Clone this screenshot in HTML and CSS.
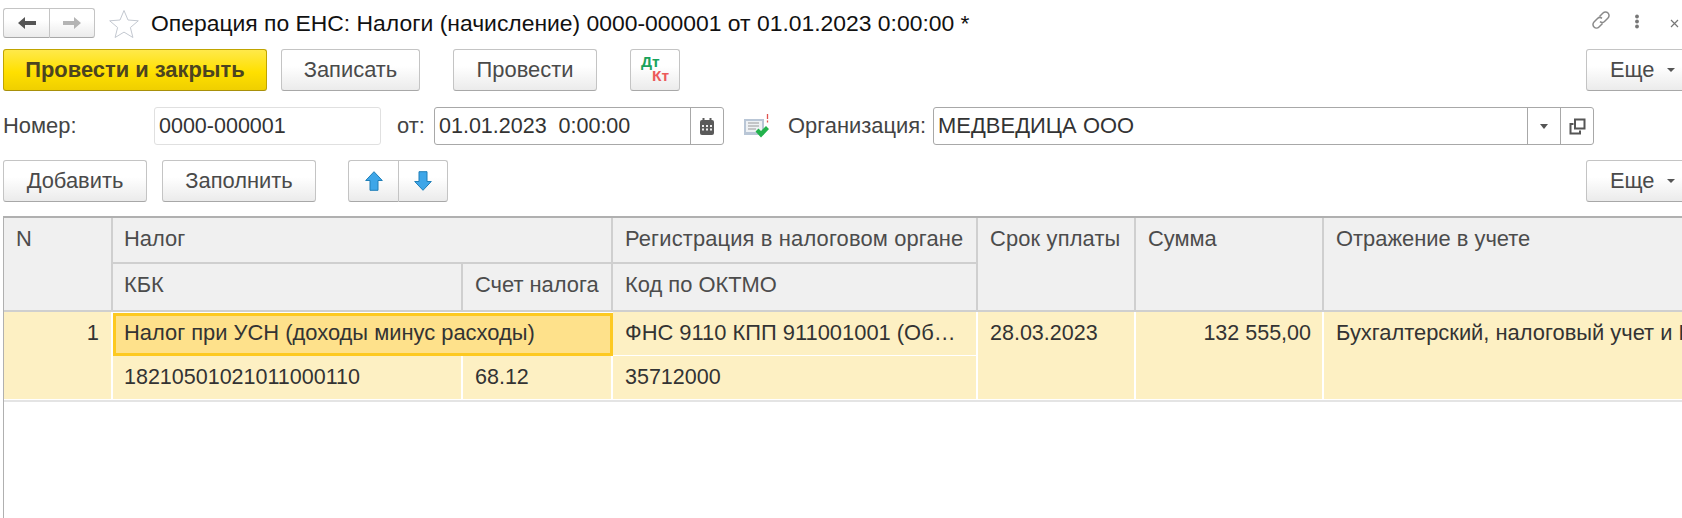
FILE: index.html
```html
<!DOCTYPE html>
<html lang="ru">
<head>
<meta charset="utf-8">
<title>Операция по ЕНС</title>
<link rel="stylesheet" href="styles.css">
</head>
<body>
<div class="page">
  <header class="row title-row">
    <div class="btn-group nav-group">
      <button class="btn seg nav-seg"><svg width="20" height="14" viewBox="0 0 20 14"><path d="M1 7 8 1v4h11v4H8v4z" fill="#555"/></svg></button>
      <button class="btn seg nav-seg"><svg width="20" height="14" viewBox="0 0 20 14"><path d="M19 7 12 1v4H1v4h11v4z" fill="#b4b4b4"/></svg></button>
    </div>
    <svg class="star" width="30" height="29" viewBox="0 0 30 29"><path d="M15 1.500 19 11l10.300 .8-7.900 6.700 2.500 10-8.900-5.400-8.900 5.400 2.500-10L.7 11.800 11 11z" fill="#fff" stroke="#c3c8d0" stroke-width="1"/></svg>
    <h1 class="title">Операция по ЕНС: Налоги (начисление) 0000-000001 от 01.01.2023 0:00:00 *</h1>
    <div class="win-tools">
      <svg class="tool-link" width="20" height="20" viewBox="0 0 20 20" fill="none" stroke="#8a8a8a" stroke-width="1.500"><path d="M8.500 6.500 12 3a3.400 3.400 0 0 1 5 5l-3.500 3.500a3.400 3.400 0 0 1-4.500 .2"/><path d="M11.500 13.500 8 17a3.400 3.400 0 0 1-5-5l3.500-3.500a3.400 3.400 0 0 1 4.500-.2"/></svg>
      <svg class="tool-dots" width="6" height="15" viewBox="0 0 6 15" fill="#777"><circle cx="3" cy="2.500" r="1.900"/><circle cx="3" cy="7.500" r="1.900"/><circle cx="3" cy="12.500" r="1.900"/></svg>
      <svg class="tool-close" width="9" height="9" viewBox="0 0 9 9" stroke="#777" stroke-width="1.200"><path d="M1 1l7 7M8 1 1 8"/></svg>
    </div>
  </header>

  <div class="row cmd-row">
    <button class="btn primary">Провести и закрыть</button>
    <button class="btn w-write">Записать</button>
    <button class="btn w-post">Провести</button>
    <button class="btn w-dtkt"><span class="dtkt"><span class="dt">Дт</span><span class="kt">Кт</span></span></button>
    <button class="btn more">Еще<i class="caret"></i></button>
  </div>

  <div class="row form-row">
    <label class="lbl lbl-num">Номер:</label>
    <div class="field f-num"><span class="val num">0000-000001</span></div>
    <label class="lbl lbl-from">от:</label>
    <div class="field f-date">
      <span class="val num">01.01.2023&nbsp; 0:00:00</span>
      <span class="fbtn fbtn-cal"><svg width="14" height="17" viewBox="0 0 14 17"><path d="M2 2h10a2 2 0 0 1 2 2v11a2 2 0 0 1-2 2H2a2 2 0 0 1-2-2V4a2 2 0 0 1 2-2z" fill="#5a5a5a"/><rect x="2.500" y="0" width="2" height="4" fill="#5a5a5a"/><rect x="9.500" y="0" width="2" height="4" fill="#5a5a5a"/><path d="M2 7h2v2H2zM6 7h2v2H6zM10 7h2v2h-2zM2 10.500h2v2H2zM6 10.500h2v2H6zM10 10.500h2v2h-2z" fill="#eee"/></svg></span>
    </div>
    <svg class="doc-status" width="26" height="26" viewBox="0 0 26 26"><path d="M1 6h20v16H1z" fill="#b9c6d6"/><path d="M3 8h16v11H3z" fill="#eef1f4"/><path d="M5 10h11M5 13h11M5 16h8" stroke="#9a9a9a" stroke-width="1.200"/><path d="M24.500 1v5M24.500 7.500v2" stroke="#e0524f" stroke-width="1.300"/><path d="M12.500 18.500l3-3 2.500 2.500 5-5 3 3-8 8.500z" fill="#22b24c"/></svg>
    <label class="lbl lbl-org">Организация:</label>
    <div class="field f-org">
      <span class="val val-org">МЕДВЕДИЦА ООО</span>
      <span class="fbtn fbtn-drop"><i class="caret caret-drop"></i></span>
      <span class="fbtn fbtn-open"><svg width="17" height="17" viewBox="0 0 17 17" fill="none" stroke="#555" stroke-width="2"><path d="M6 1.500h9.500v9H6z"/><path d="M4.500 6H1.500v9.500H11v-3"/></svg></span>
    </div>
  </div>

  <div class="row cmd-row tbl-cmd">
    <button class="btn w-add">Добавить</button>
    <button class="btn w-fill">Заполнить</button>
    <div class="btn-group move-group">
      <button class="btn seg move-seg"><svg width="18" height="20" viewBox="0 0 18 20"><path d="M9 .7 17.300 9.500H13v9.800H5V9.500H.7z" fill="#3ea6e8" stroke="#1f7fb8" stroke-width="1"/></svg></button>
      <button class="btn seg move-seg"><svg width="18" height="20" viewBox="0 0 18 20"><path d="M9 19.300 .7 10.500H5V.7h8v9.800h4.300z" fill="#3ea6e8" stroke="#1f7fb8" stroke-width="1"/></svg></button>
    </div>
    <button class="btn more">Еще<i class="caret"></i></button>
  </div>

  <section class="table-wrap">
    <div class="grid">
      <div class="hd c-n r-all-h">N</div>
      <div class="hd c-tax r1">Налог</div>
      <div class="hd c-reg r1 wide">Регистрация в налоговом органе</div>
      <div class="hd c-date r-all-h wide">Срок уплаты</div>
      <div class="hd c-sum r-all-h">Сумма</div>
      <div class="hd c-acc r-all-h">Отражение в учете</div>
      <div class="hd c-kbk r2">КБК</div>
      <div class="hd c-acct r2">Счет налога</div>
      <div class="hd c-reg r2">Код по ОКТМО</div>

      <div class="td c-n r-all-b right">1</div>
      <div class="td c-tax r3 selected">Налог при УСН (доходы минус расходы)</div>
      <div class="td c-reg r3">ФНС 9110 КПП 911001001 (Об…</div>
      <div class="td c-date r-all-b num">28.03.2023</div>
      <div class="td c-sum r-all-b right num">132 555,00</div>
      <div class="td c-acc r-all-b">Бухгалтерский, налоговый учет и Н</div>
      <div class="td c-kbk r4 num">18210501021011000110</div>
      <div class="td c-acct r4 num">68.12</div>
      <div class="td c-reg r4 num">35712000</div>
    </div>
  </section>
</div>
</body>
</html>
```

FILE: styles.css
```css
* { box-sizing: border-box; }
html, body { margin: 0; padding: 0; background: #fff; }
body { width: 1682px; height: 518px; overflow: hidden; font-family: "Liberation Sans", Arial, sans-serif; font-size: 21.900px; color: #444; }
.page { display: flex; flex-direction: column; height: 518px; overflow: hidden; }
.row { display: flex; align-items: center; padding-left: 3px; flex: none; }

.title-row { height: 30px; margin-top: 8px; }
.title { margin: 0 0 0 12px; font-size: 22.900px; font-weight: 400; color: #111; white-space: nowrap; }
.star { margin-left: 14px; flex: none; }
.win-tools { margin-left: auto; display: flex; align-items: center; }
.tool-link { margin-right: 23px; margin-top: -6px; }
.tool-dots { margin-right: 30px; margin-top: -4px; }
.tool-close { margin-right: 3px; }

.btn { font: inherit; color: #4a4a4a; height: 100%; padding: 0; display: flex; align-items: center; justify-content: center; border: 1px solid #c4c4c4; border-bottom-color: #a8a8a8; border-radius: 3px; background: linear-gradient(#fff 40%, #ebebeb); flex: none; }
.btn-group { display: flex; height: 100%; flex: none; }
.seg { border-radius: 0; }
.seg:first-child { border-radius: 3px 0 0 3px; border-right: 0; }
.seg:last-child { border-radius: 0 3px 3px 0; }
.nav-seg { width: 46px; }
.move-seg { width: 50px; }

.cmd-row { height: 42px; margin-top: 11px; }
.primary { width: 264px; font-weight: 700; color: #4c4420; border-color: #c0a400 #c0a400 #a8900a; background: linear-gradient(#ffe94a, #ffe000 55%, #efcf00); }
.w-write { width: 139px; margin-left: 14px; }
.w-post { width: 144px; margin-left: 33px; }
.w-dtkt { width: 50px; margin-left: 33px; }
.more { width: 110px; margin-left: auto; margin-right: -14px; justify-content: flex-start; padding-left: 23px; }
.caret { display: inline-block; width: 0; height: 0; margin-left: 12px; border: 4px solid transparent; border-top: 4px solid #555; border-bottom: 0; }
.dtkt { display: flex; flex-direction: column; font-size: 15.500px; font-weight: 700; line-height: 14px; width: 28px; margin-top: -3px; text-align: left; }
.dt { color: #1aa35c; }
.kt { color: #ec5b5b; align-self: flex-end; }

.form-row { height: 38px; margin-top: 16px; }
.lbl { white-space: nowrap; flex: none; }
.lbl-num { width: 151px; }
.lbl-from { width: 37px; margin-left: 16px; }
.lbl-org { width: 145px; margin-left: 19px; }
.field { height: 100%; display: flex; align-items: center; border: 1px solid #a8a8a8; border-radius: 3px; background: #fff; flex: none; color: #333; }
.val { flex: 1; padding-left: 4px; white-space: nowrap; }
.val-org { letter-spacing: .06px; }
.num { font-size: 21.500px; }
.f-num { width: 227px; border-color: #e0e0e0; }
.f-date { width: 290px; }
.f-org { width: 661px; }
.fbtn { height: 100%; border-left: 1px solid #a8a8a8; display: flex; align-items: center; justify-content: center; flex: none; }
.fbtn-cal { width: 33px; }
.fbtn-drop { width: 33px; }
.fbtn-open { width: 33px; }
.caret-drop { margin-left: 0; border-width: 5px 4px 0; border-top-color: #555; }
.doc-status { margin-left: 19px; flex: none; }

.tbl-cmd { margin-top: 15px; }
.w-add { width: 144px; }
.w-fill { width: 154px; margin-left: 15px; }
.move-group { margin-left: 32px; }

.table-wrap { flex: 1; margin: 14px 0 0 3px; border-top: 2px solid #b0b0b0; border-left: 1px solid #b0b0b0; overflow: hidden; }
.grid { display: grid; grid-template-columns: 109px 350px 150px 365px 158px 188px 400px; grid-template-rows: 46px 48px 44px 44px; width: 1720px; border-bottom: 2px solid #e4e4e4; }
.hd { background: #f0f0f0; border-right: 2px solid #cfcfcf; border-bottom: 2px solid #cfcfcf; padding: 8px 10px 0 12px; color: #4c4c4c; white-space: nowrap; line-height: 26px; overflow: hidden; }
.td { background: #fdf0c3; border-right: 2px solid #fff; border-bottom: 1px solid #fff; padding: 8px 10px 0 12px; color: #333; white-space: nowrap; line-height: 26px; overflow: hidden; }
.wide { letter-spacing: .15px; }
.c-n { grid-column: 1; }
.c-tax { grid-column: 2 / 4; padding-left: 11px; }
.c-kbk { grid-column: 2; padding-left: 11px; }
.c-acct { grid-column: 3; }
.c-reg { grid-column: 4; }
.c-date { grid-column: 5; }
.c-sum { grid-column: 6; }
.c-acc { grid-column: 7; }
.r1 { grid-row: 1; }
.r2 { grid-row: 2; }
.r3 { grid-row: 3; }
.r4 { grid-row: 4; }
.r-all-h { grid-row: 1 / 3; }
.r-all-b { grid-row: 3 / 5; }
.right { text-align: right; padding-right: 12px; }
.c-sum.right { padding-right: 11px; }
.selected { background: #fee18b; border: 3px solid #fdc921; padding: 4px 8px 0 8px; margin: 1px 0 0 0; }
```
